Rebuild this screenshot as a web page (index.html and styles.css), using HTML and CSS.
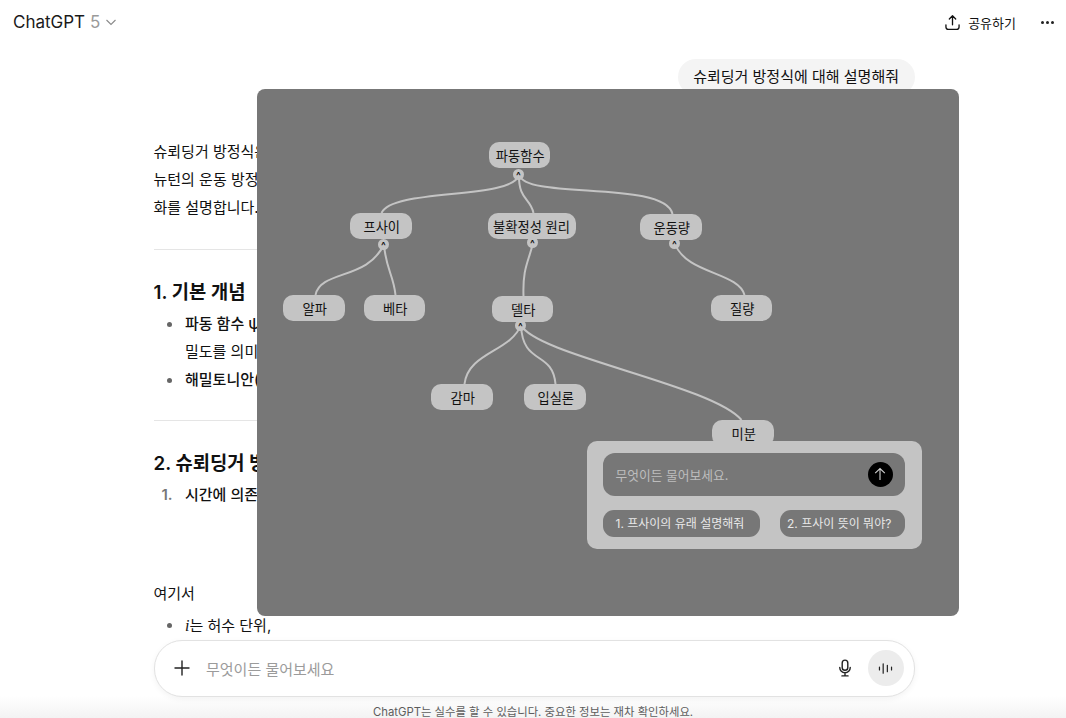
FILE: index.html
```html
<!DOCTYPE html>
<html lang="ko">
<head>
<meta charset="utf-8">
<title>ChatGPT</title>
<link rel="stylesheet" href="styles.css">
</head>
<body>
<div class="app">
  <header class="topbar">
    <div class="model">ChatGPT <span class="model-ver">5</span>
      <svg class="chev" viewBox="0 0 12 12" width="12" height="12"><path d="M1.5 4 L6 8.5 L10.5 4" fill="none" stroke="#8a8a8a" stroke-width="1.1"/></svg>
    </div>
    <div class="actions">
      <svg class="share-icon" viewBox="0 0 16 18" width="15" height="17"><path d="M8 11.5V2M4.6 5.2 8 1.8l3.4 3.4M1 11.5v2.2a2.6 2.6 0 0 0 2.6 2.6h8.8a2.6 2.6 0 0 0 2.6-2.6v-2.2" fill="none" stroke="#111" stroke-width="1.4" stroke-linecap="round" stroke-linejoin="round"/></svg>
      <span class="share-label">공유하기</span>
      <span class="dots"><i></i><i></i><i></i></span>
    </div>
  </header>

  <main class="thread">
    <div class="bubble-row"><div class="bubble">슈뢰딩거 방정식에 대해 설명해줘</div></div>
    <p class="para">슈뢰딩거 방정식은<br>뉴턴의 운동 방정식과<br>화를 설명합니다.</p>
    <hr class="rule">
    <h3 class="heading">1. 기본 개념</h3>
    <ul class="list">
      <li><b>파동 함수 ψ</b><br>밀도를 의미합니다</li>
      <li><b>해밀토니안(Ĥ)</b></li>
    </ul>
    <hr class="rule">
    <h3 class="heading">2. 슈뢰딩거 방정식</h3>
    <ol class="numbered">
      <li><b>시간에 의존하는 방정식</b></li>
    </ol>
    <p class="para">여기서</p>
    <ul class="list">
      <li><em class="math">i</em>는 허수 단위,</li>
    </ul>
  </main>

  <section class="composer-area">
    <div class="composer">
      <svg class="plus" viewBox="0 0 16 16" width="16" height="16"><path d="M8 1v14M1 8h14" stroke="#222" stroke-width="1.4" stroke-linecap="round"/></svg>
      <span class="placeholder">무엇이든 물어보세요</span>
      <svg class="mic" viewBox="0 0 16 20" width="14" height="18"><rect x="4.8" y="1" width="6.4" height="11.5" rx="3.2" fill="none" stroke="#222" stroke-width="1.6"/><path d="M2 9.5a6 6 0 0 0 12 0M8 15.5V19M4.5 19h7" fill="none" stroke="#222" stroke-width="1.6" stroke-linecap="round"/></svg>
      <div class="voice">
        <svg viewBox="0 0 16 14" width="15" height="13"><path d="M1.5 5.5v3M5.5 2v10M10 3.5v7M14.5 5.5v3" stroke="#222" stroke-width="1.3" stroke-linecap="round"/></svg>
      </div>
    </div>
    <p class="disclaimer">ChatGPT는 실수를 할 수 있습니다. 중요한 정보는 재차 확인하세요.</p>
  </section>
</div>

<div class="overlay">
  <svg class="links" viewBox="256.5 89 702.5 527" width="702.5" height="527">
    <path d="M518.5 175C512 200 392 188 381 213"/>
    <path d="M518.5 175C518 200 530 198 533 213"/>
    <path d="M518.5 175C526 200 664 180 672 214"/>
    <path d="M383.5 244C368 280 320 270 315 295"/>
    <path d="M383.5 244C385 268 393 275 395 295"/>
    <path d="M532.5 243C528 262 522 268 523 296"/>
    <path d="M674.5 244C686 274 738 272 744 295"/>
    <path d="M520.5 325C510 352 468 352 464 384"/>
    <path d="M520.5 325C522 366 552 350 555 384"/>
    <path d="M520.5 325C535 355 712 385 741 420"/>
  </svg>
  <div class="node n-wave">파동함수</div><span class="dot d-wave">^</span>
  <div class="node n-psi">프사이</div><span class="dot d-psi">^</span>
  <div class="node n-unc">불확정성 원리</div><span class="dot d-unc">^</span>
  <div class="node n-mom">운동량</div><span class="dot d-mom">^</span>
  <div class="node n-alpha">알파</div>
  <div class="node n-beta">베타</div>
  <div class="node n-delta">델타</div><span class="dot d-delta">^</span>
  <div class="node n-mass">질량</div>
  <div class="node n-gamma">감마</div>
  <div class="node n-eps">입실론</div>
  <div class="node n-diff">미분</div>

  <div class="ask-panel">
    <div class="ask-input">
      <span class="ask-placeholder">무엇이든 물어보세요.</span>
      <span class="ask-send"><svg viewBox="0 0 14 14" width="14" height="14"><path d="M7 13V1.5M2.2 6.2 7 1.5l4.8 4.7" fill="none" stroke="#d0d0d0" stroke-width="1.1"/></svg></span>
    </div>
    <div class="ask-suggestions">
      <span class="chip chip-a">1. 프사이의 유래 설명해줘</span>
      <span class="chip chip-b">2. 프사이 뜻이 뭐야?</span>
    </div>
  </div>
</div>
</body>
</html>
```
FILE: styles.css
```css
* { box-sizing: border-box; }
html, body { margin: 0; height: 100%; overflow: hidden; background: #fff; }
body {
  font-family: Inter, "Noto Sans CJK KR", sans-serif;
  font-size: 15px;
  color: #111;
  position: relative;
}
.app { display: flex; flex-direction: column; height: 718px; }

.topbar {
  height: 44px;
  flex: none;
  display: flex;
  align-items: center;
  justify-content: space-between;
  padding: 0 12px 0 13px;
}
.model { font-size: 17px; display: flex; align-items: center; gap: 5px; color: #1a1a1a; }
.model-ver { color: #9a9a9a; }
.actions { display: flex; align-items: center; }
.share-icon { margin-right: 8px; }
.share-label { font-size: 13px; margin-right: 25px; }
.dots { display: flex; gap: 2px; }
.dots i { width: 3px; height: 3px; border-radius: 50%; background: #222; display: block; }

.thread {
  flex: 1;
  min-height: 0;
  overflow: hidden;
  padding: 15px 151.5px 0 153.5px;
}
.bubble-row { display: flex; justify-content: flex-end; margin-bottom: 43px; }
.bubble { background: #f4f4f4; border-radius: 18px; padding: 7px 15.5px; line-height: 22px; height: 36px; }
.para { margin: 0; line-height: 27.75px; white-space: nowrap; }
.rule { border: 0; border-top: 1px solid #e5e5e5; margin: 28px 0 29px; }
.heading { margin: 0; font-size: 18.75px; font-weight: 600; line-height: 28px; }
.list, .numbered { margin: 3px 0 0; padding-left: 31.5px; line-height: 28px; white-space: nowrap; list-style: none; }
.list + .rule { margin-top: 26px; }
.numbered { margin-bottom: 71px; }
.para + .list { margin-top: 4px; }
.list b, .numbered b { font-weight: 500; }
.list li::before {
  content: "";
  display: inline-block;
  width: 5px; height: 5px;
  border-radius: 50%;
  background: #666;
  vertical-align: middle;
  margin: 0 13.5px 2px -18.5px;
}
.numbered li::before {
  content: "1.";
  display: inline-block;
  width: 23.5px;
  margin-left: -23.5px;
  color: #777;
  font-weight: 600;
}
.math { font-family: "Liberation Serif", serif; font-style: italic; font-size: 16px; }

.composer-area { flex: none; height: 78px; background: linear-gradient(#fff 72%, #f3f3f3 100%); }
.composer {
  margin: 0 151.5px 0 153.5px;
  height: 56.5px;
  border: 1px solid #e2e2e2;
  border-radius: 28px;
  background: #fff;
  box-shadow: 0 2px 6px rgba(0,0,0,.05);
  display: flex;
  align-items: center;
  padding: 0 10px 0 19px;
}
.plus { flex: none; }
.placeholder { margin-left: 16.5px; flex: 1; color: #9b9b9b; font-size: 15px; }
.mic { flex: none; margin-right: 16px; }
.voice {
  flex: none;
  width: 36px; height: 36px;
  border-radius: 50%;
  background: #ececec;
  display: flex; align-items: center; justify-content: center;
}
.disclaimer { margin: 8px 0 0; text-align: center; font-size: 11.35px; line-height: 15px; color: #5d5d5d; }

.overlay {
  position: absolute;
  left: 256.5px; top: 89px;
  width: 702.5px; height: 527px;
  background: #777;
  border-radius: 8px;
}
.links { position: absolute; inset: 0; }
.links path { fill: none; stroke: #c4c4c4; stroke-width: 2; }
.node {
  position: absolute;
  height: 26px;
  width: 61.5px;
  padding-left: 2px;
  background: #c4c4c4;
  border-radius: 10px;
  display: flex; align-items: center; justify-content: center;
  font-size: 13.25px;
  color: #111;
  white-space: nowrap;
}
.n-wave { left: 232px; top: 53px; }
.n-psi { left: 93.5px; top: 124px; }
.n-unc { left: 231px; top: 124px; width: 88px; padding-left: 0; }
.n-mom { left: 383.5px; top: 125px; }
.n-alpha { left: 26.5px; top: 206px; }
.n-beta { left: 107px; top: 206px; }
.n-delta { left: 235px; top: 207px; }
.n-mass { left: 454px; top: 206px; }
.n-gamma { left: 174.5px; top: 295px; }
.n-eps { left: 267.5px; top: 295px; }
.n-diff { left: 455.5px; top: 331px; }
.dot {
  position: absolute;
  width: 11px; height: 11px;
  border-radius: 50%;
  background: #c4c4c4;
  color: #111;
  font-size: 10px;
  line-height: 12px;
  text-align: center;
  font-weight: 600;
  overflow: hidden;
}
.d-wave { left: 256.5px; top: 79.5px; }
.d-psi { left: 121.5px; top: 149.5px; }
.d-unc { left: 270.5px; top: 148px; }
.d-mom { left: 412.5px; top: 149px; }
.d-delta { left: 258.5px; top: 230.5px; }

.ask-panel {
  position: absolute;
  left: 330px; top: 352px;
  width: 335px; height: 108px;
  background: #c4c4c4;
  border-radius: 10px;
  padding: 12px 17px 12px 16.5px;
  display: flex; flex-direction: column; gap: 14px;
}
.ask-input {
  height: 42.5px;
  flex: none;
  background: #777;
  border-radius: 12px;
  display: flex; align-items: center; justify-content: space-between;
  padding: 0 12px 0 12.5px;
}
.ask-placeholder { font-size: 12.75px; color: #bdbdbd; }
.ask-send {
  width: 25px; height: 25px;
  border-radius: 50%;
  background: #000;
  display: flex; align-items: center; justify-content: center;
}
.ask-suggestions { display: flex; justify-content: space-between; }
.chip {
  height: 27.5px;
  background: #777;
  border-radius: 11px;
  color: #e8e8e8;
  font-size: 12px;
  font-weight: 400;
  display: flex; align-items: center;
  white-space: nowrap;
  padding-bottom: 2px;
}
.chip-a { width: 157px; padding-left: 12.5px; }
.chip-b { width: 124.5px; padding-left: 7px; }
```
